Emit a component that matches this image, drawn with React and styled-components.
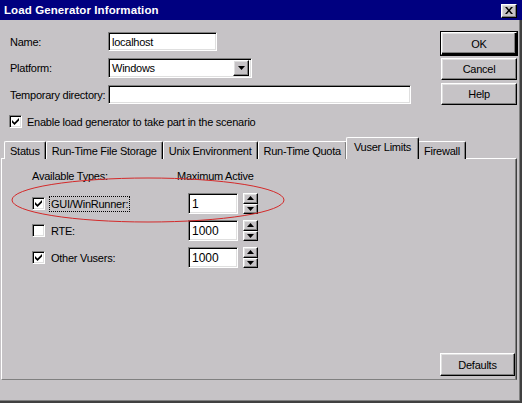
import React from 'react';
import styled, { createGlobalStyle } from 'styled-components';

const GlobalStyle = createGlobalStyle`
  html, body {
    margin: 0;
    padding: 0;
    background: #c6c3c6;
  }
  * {
    box-sizing: border-box;
  }
`;

const Window = styled.div`
  width: 522px;
  height: 403px;
  display: flex;
  flex-direction: column;
  background: #c6c3c6;
  font-family: 'Liberation Sans', Arial, sans-serif;
  font-size: 11px;
  letter-spacing: -0.25px;
  color: #000;
  overflow: hidden;
`;

const TitleBar = styled.div`
  height: 20px;
  flex-shrink: 0;
  display: flex;
  align-items: center;
  justify-content: space-between;
  padding: 0 5px 0 4px;
  background: #000080;
  color: #fff;
`;

const Title = styled.span`
  font-weight: 700;
  font-size: 11.5px;
  letter-spacing: 0.1px;
`;

const raised = `
  background: #c6c3c6;
  border-top: 1px solid #fff;
  border-left: 1px solid #fff;
  border-right: 1px solid #000;
  border-bottom: 1px solid #000;
  box-shadow: inset -1px -1px #808080, inset 1px 1px #dfdfdf;
`;

const sunken = `
  background: #fff;
  border-top: 1px solid #808080;
  border-left: 1px solid #808080;
  border-right: 1px solid #fff;
  border-bottom: 1px solid #fff;
  box-shadow: inset 1px 1px #000, inset -1px -1px #dfdfdf;
`;

const CloseButton = styled.div`
  ${raised}
  width: 16px;
  height: 14px;
  display: flex;
  align-items: center;
  justify-content: center;
  margin-top: 1px;
`;

const Body = styled.div`
  flex: 1;
  display: flex;
  flex-direction: column;
  padding: 12px 3px 21px 1px;
  border-right: 2px solid #404040;
  border-bottom: 2px solid #404040;
  box-shadow: inset -1px -1px #808080;
`;

const TopArea = styled.div`
  display: flex;
  justify-content: space-between;
`;

const Form = styled.div`
  display: flex;
  flex-direction: column;
  gap: 7px;
  padding-left: 9px;
`;

const FieldRow = styled.div`
  display: flex;
  align-items: center;
  height: ${(p) => p.$h || 19}px;
`;

const Label = styled.span`
  width: 98px;
  flex-shrink: 0;
  white-space: nowrap;
`;

const TextField = styled.div`
  ${sunken}
  width: ${(p) => p.$w}px;
  height: 100%;
  display: flex;
  align-items: center;
  padding-left: 3px;
`;

const SelectField = styled(TextField)`
  justify-content: space-between;
  padding-right: 2px;
`;

const DropButton = styled.div`
  ${raised}
  width: 16px;
  height: 16px;
  display: flex;
  align-items: center;
  justify-content: center;
`;

const ButtonColumn = styled.div`
  display: flex;
  flex-direction: column;
  gap: 3px;
`;

const Button = styled.div`
  ${raised}
  width: ${(p) => p.$w || 76}px;
  height: ${(p) => p.$h || 22}px;
  display: flex;
  align-items: center;
  justify-content: center;
  ${(p) =>
    p.$default &&
    `
    outline: 1px solid #000;
    outline-offset: 0;
    border-right-color: #000;
    border-bottom-color: #000;
    box-shadow: inset -1px -1px #000, inset -2px -2px #808080, inset 1px 1px #dfdfdf;
  `}
`;

const CheckRow = styled.div`
  display: flex;
  align-items: center;
  gap: 5px;
  margin-top: 10px;
  padding-left: 8px;
  height: 13px;
`;

const CheckBox = styled.div`
  ${sunken}
  width: 13px;
  height: 13px;
  flex-shrink: 0;
  display: flex;
  align-items: center;
  justify-content: center;
`;

const TabStrip = styled.div`
  display: flex;
  align-items: flex-end;
  height: 22px;
  margin-top: 9px;
  padding-left: 3px;
  position: relative;
  z-index: 2;
  margin-bottom: -1px;
`;

const Tab = styled.div`
  height: ${(p) => (p.$active ? 22 : 18)}px;
  padding: 0 ${(p) => (p.$active ? 7 : 5)}px ${(p) => (p.$active ? 3 : 0)}px;
  margin: 0 ${(p) => (p.$active ? -1 : 0)}px;
  display: flex;
  align-items: center;
  white-space: nowrap;
  background: #c6c3c6;
  border-top: 1px solid #fff;
  border-left: 1px solid #fff;
  border-right: 1px solid #000;
  border-top-left-radius: 2px;
  border-top-right-radius: 2px;
  box-shadow: inset -1px 0 #808080;
  position: relative;
  z-index: ${(p) => (p.$active ? 3 : 1)};
`;

const Panel = styled.div`
  flex: 1;
  display: flex;
  flex-direction: column;
  padding: 10px 1px 3px 30px;
  border-top: 1px solid #fff;
  border-left: 1px solid #fff;
  border-right: 1px solid #404040;
  border-bottom: 1px solid #808080;
  box-shadow: inset -1px 0 #808080;
`;

const HeaderRow = styled.div`
  display: flex;
  height: 13px;
  align-items: center;
`;

const HeaderLabel = styled.span`
  width: ${(p) => p.$w || 'auto'}px;
  white-space: nowrap;
`;

const Rows = styled.div`
  display: flex;
  flex-direction: column;
  gap: 6px;
  margin-top: 11px;
`;

const TypeRow = styled.div`
  display: flex;
  align-items: center;
  height: 21px;
`;

const TypeCell = styled.div`
  width: 156px;
  display: flex;
  align-items: center;
  gap: 5px;
`;

const TypeLabel = styled.span`
  padding: 1px 1px;
  outline: ${(p) => (p.$focus ? '1px dotted #000' : 'none')};
  white-space: nowrap;
`;

const NumberField = styled(TextField)`
  width: 50px;
  font-size: 12px;
  letter-spacing: 0;
`;

const Spinner = styled.div`
  width: 15px;
  height: 21px;
  margin-left: 5px;
  display: flex;
  flex-direction: column;
`;

const SpinHalf = styled.div`
  ${raised}
  flex: 1;
  display: flex;
  align-items: center;
  justify-content: center;
`;

const Footer = styled.div`
  margin-top: auto;
  display: flex;
  justify-content: flex-end;
`;

const Ellipse = styled.svg`
  position: absolute;
  left: 0;
  top: 0;
  pointer-events: none;
  z-index: 5;
`;

const Stage = styled.div`
  position: relative;
  width: 522px;
  height: 403px;
`;

const Tick = () => (
  <svg width="9" height="9" viewBox="0 0 9 9">
    <path d="M1 3 L1 5.5 L3.5 8 L8 3.5 L8 1 L3.5 5.5 Z" fill="#000" />
  </svg>
);

const Arrow = ({ up }) => (
  <svg width="7" height="4" viewBox="0 0 7 4">
    <path d={up ? 'M3.5 0 L7 4 L0 4 Z' : 'M0 0 L7 0 L3.5 4 Z'} fill="#000" />
  </svg>
);

const Spin = () => (
  <Spinner>
    <SpinHalf>
      <Arrow up />
    </SpinHalf>
    <SpinHalf>
      <Arrow />
    </SpinHalf>
  </Spinner>
);

const tabs = [
  'Status',
  'Run-Time File Storage',
  'Unix Environment',
  'Run-Time Quota',
  'Vuser Limits',
  'Firewall',
];

const types = [
  { name: 'GUI/WinRunner:', checked: true, value: '1', focus: true },
  { name: 'RTE:', checked: false, value: '1000' },
  { name: 'Other Vusers:', checked: true, value: '1000' },
];

export default function App() {
  return (
    <Stage>
      <GlobalStyle />
      <Window>
        <TitleBar>
          <Title>Load Generator Information</Title>
          <CloseButton>
            <svg width="8" height="7" viewBox="0 0 8 7">
              <path d="M0 0 L2 0 L4 2.5 L6 0 L8 0 L5 3.5 L8 7 L6 7 L4 4.5 L2 7 L0 7 L3 3.5 Z" fill="#000" />
            </svg>
          </CloseButton>
        </TitleBar>
        <Body>
          <TopArea>
            <Form>
              <FieldRow>
                <Label>Name:</Label>
                <TextField $w={109}>localhost</TextField>
              </FieldRow>
              <FieldRow $h={20}>
                <Label>Platform:</Label>
                <SelectField $w={144}>
                  Windows
                  <DropButton>
                    <Arrow />
                  </DropButton>
                </SelectField>
              </FieldRow>
              <FieldRow>
                <Label>Temporary directory:</Label>
                <TextField $w={303} />
              </FieldRow>
            </Form>
            <ButtonColumn>
              <Button $default $h={23}>OK</Button>
              <Button>Cancel</Button>
              <Button>Help</Button>
            </ButtonColumn>
          </TopArea>
          <CheckRow>
            <CheckBox>
              <Tick />
            </CheckBox>
            <span>Enable load generator to take part in the scenario</span>
          </CheckRow>
          <TabStrip>
            {tabs.map((t) => (
              <Tab key={t} $active={t === 'Vuser Limits'}>
                {t}
              </Tab>
            ))}
          </TabStrip>
          <Panel>
            <HeaderRow>
              <HeaderLabel $w={145}>Available Types:</HeaderLabel>
              <HeaderLabel>Maximum Active</HeaderLabel>
            </HeaderRow>
            <Rows>
              {types.map((t) => (
                <TypeRow key={t.name}>
                  <TypeCell>
                    <CheckBox>{t.checked && <Tick />}</CheckBox>
                    <TypeLabel $focus={t.focus}>{t.name}</TypeLabel>
                  </TypeCell>
                  <NumberField $w={50}>{t.value}</NumberField>
                  <Spin />
                </TypeRow>
              ))}
            </Rows>
            <Footer>
              <Button $w={75} $h={23}>Defaults</Button>
            </Footer>
          </Panel>
        </Body>
      </Window>
      <Ellipse width="522" height="403">
        <ellipse cx="148" cy="200" rx="136" ry="22" fill="none" stroke="#d42a2a" strokeWidth="1" />
      </Ellipse>
    </Stage>
  );
}
